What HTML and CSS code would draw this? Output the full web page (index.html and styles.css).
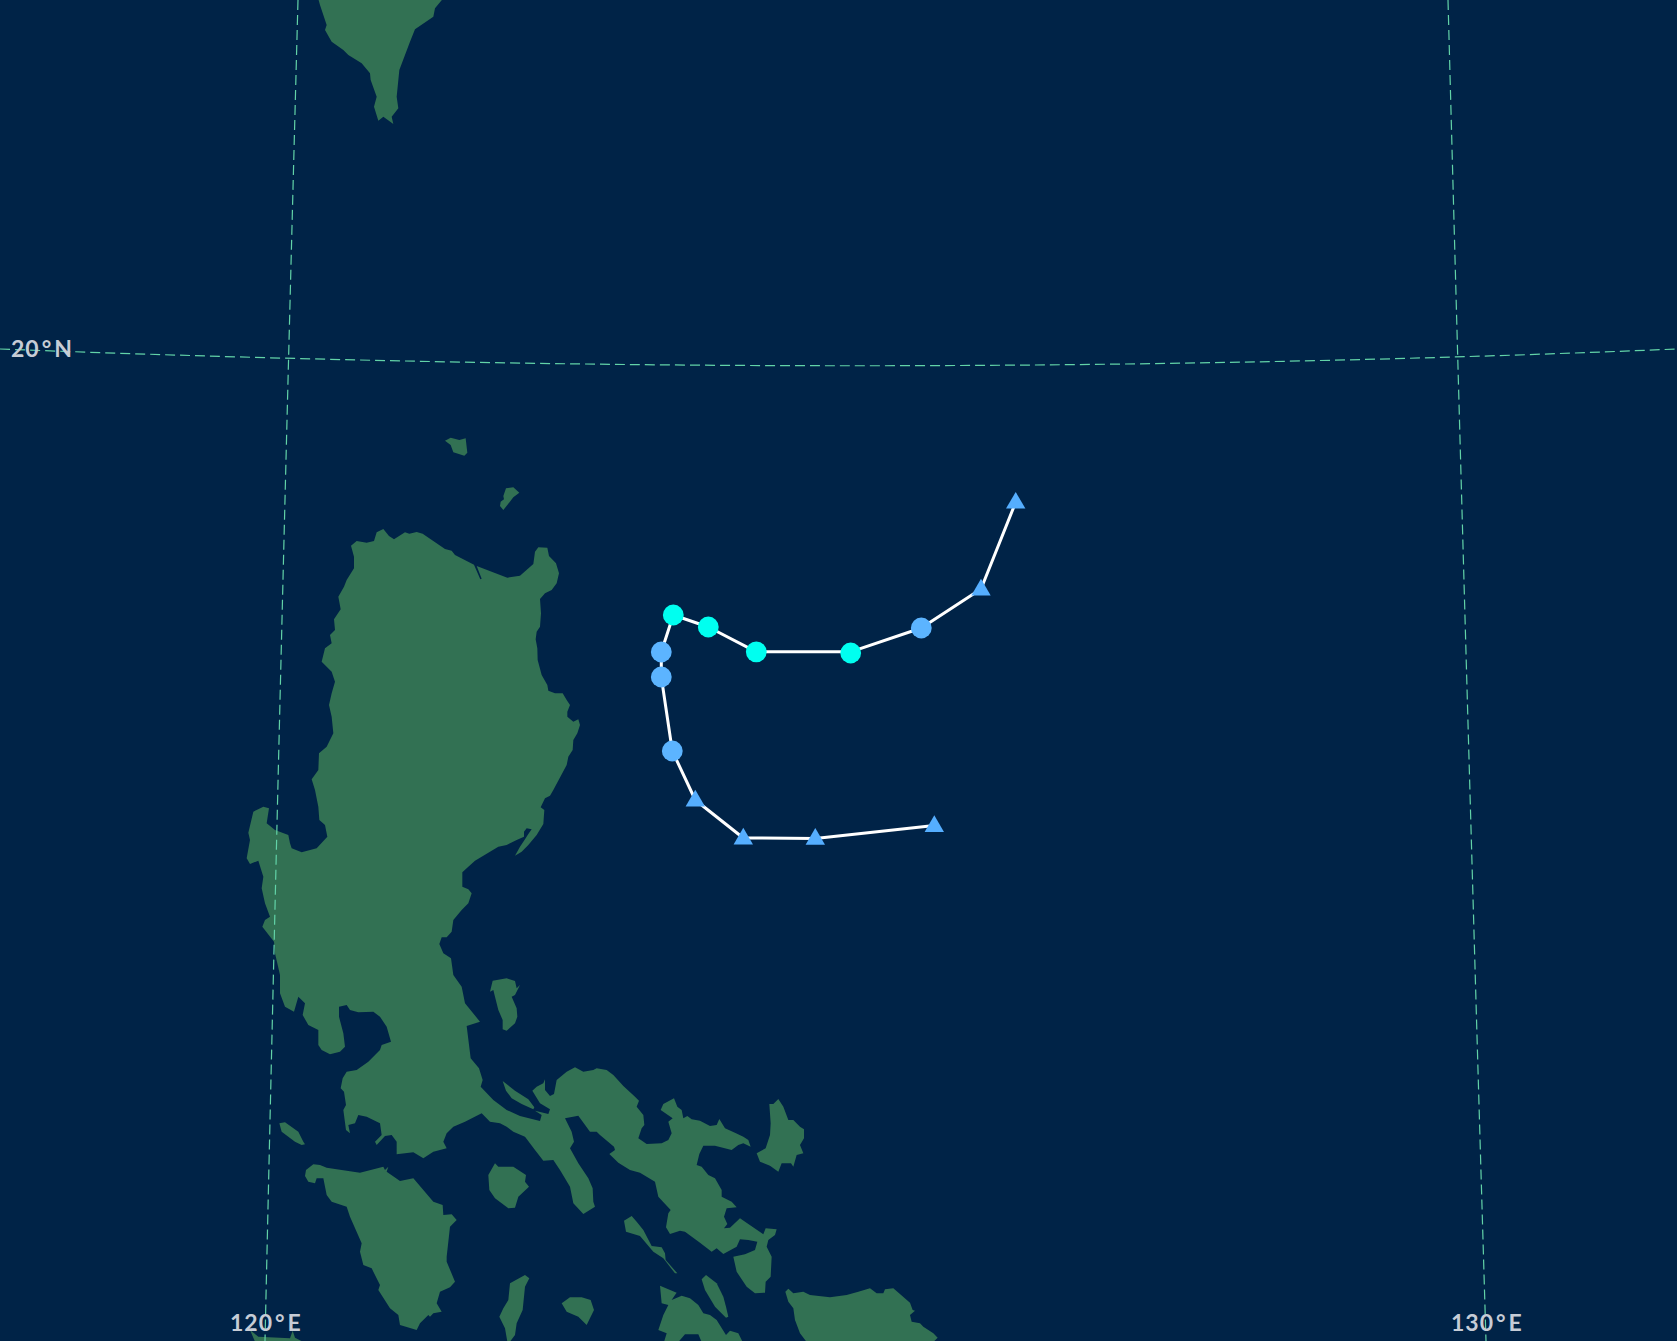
FILE: index.html
```html
<!DOCTYPE html>
<html lang="en">
<head>
<meta charset="utf-8">
<title>Storm track map</title>
<link rel="stylesheet" href="styles.css">
</head>
<body>
<svg class="map" viewBox="0 0 1677 1341" width="1677" height="1341" xmlns="http://www.w3.org/2000/svg">
  <defs>
    <path id="tri" d="M0-10.3 9.7 6.4H-9.7Z"/>
  </defs>

  <g class="land">
    <g transform="translate(220 400) scale(.33333)">
      <polygon points="393,437 410,423 440,428 462,423 470,397 490,387 507,408 522,418 555,397 568,401 590,396 608,401 675,447 695,452 705,465 762,494 781,538 785,536 770,498 862,533 900,527 940,492 945,455 955,442 982,443 987,468 1008,490 1017,520 1010,550 995,570 975,580 960,597 963,640 960,680 950,695 947,718 952,745 953,780 965,825 982,855 985,872 1005,880 1028,880 1040,900 1050,915 1042,935 1042,950 1060,965 1075,958 1080,975 1072,1000 1060,1020 1058,1050 1045,1070 1040,1095 1000,1170 990,1187 975,1195 962,1222 973,1230 970,1272 950,1305 925,1335 905,1355 885,1367 900,1340 915,1318 925,1302 935,1288 920,1285 912,1295 912,1310 890,1320 860,1335 835,1340 810,1355 765,1382 745,1400 727,1417 727,1460 745,1468 755,1480 745,1510 725,1530 700,1560 695,1595 680,1612 665,1612 658,1632 670,1660 693,1675 700,1725 725,1760 735,1810 780,1865 740,1878 752,1975 777,2005 788,2040 782,2060 820,2100 860,2130 900,2148 960,2163 965,2145 945,2132 985,2142 990,2128 960,2110 937,2072 950,2060 970,2050 975,2038 975,2070 990,2088 1002,2082 1010,2040 1040,2015 1065,2002 1090,2015 1120,2010 1130,2005 1160,2010 1180,2025 1210,2058 1245,2090 1257,2102 1250,2120 1270,2145 1273,2175 1265,2185 1255,2215 1280,2232 1325,2230 1345,2220 1355,2200 1345,2165 1358,2155 1322,2130 1330,2112 1362,2095 1372,2120 1385,2130 1390,2155 1402,2148 1415,2158 1440,2162 1470,2178 1490,2175 1498,2157 1515,2185 1548,2200 1570,2210 1585,2220 1592,2240 1570,2230 1555,2235 1535,2250 1485,2237 1450,2237 1438,2262 1430,2295 1445,2300 1465,2325 1485,2335 1505,2370 1505,2390 1535,2405 1550,2422 1520,2425 1512,2450 1522,2472 1512,2485 1530,2483 1560,2455 1585,2472 1630,2503 1637,2485 1670,2488 1665,2505 1645,2520 1640,2540 1655,2570 1652,2630 1637,2645 1635,2678 1605,2680 1580,2660 1550,2615 1540,2570 1575,2563 1605,2550 1612,2525 1585,2520 1560,2518 1550,2540 1510,2562 1490,2545 1475,2555 1440,2528 1395,2495 1380,2492 1350,2502 1338,2482 1345,2440 1352,2430 1315,2390 1305,2345 1260,2318 1230,2310 1195,2288 1168,2262 1185,2250 1182,2240 1140,2205 1130,2195 1110,2195 1075,2147 1035,2155 1055,2195 1062,2225 1050,2245 1075,2290 1105,2335 1118,2365 1120,2405 1125,2420 1090,2442 1060,2410 1050,2360 1020,2310 1000,2280 970,2282 945,2250 915,2210 880,2195 860,2180 840,2170 810,2165 785,2140 735,2165 700,2180 680,2200 670,2225 680,2245 640,2255 610,2275 580,2257 530,2263 530,2225 515,2205 495,2208 470,2235 465,2225 485,2205 480,2170 440,2150 415,2145 405,2170 385,2175 390,2200 378,2190 370,2130 378,2115 372,2075 362,2065 368,2035 380,2015 410,2010 445,1985 480,1950 485,1935 513,1925 500,1880 480,1850 460,1835 415,1837 390,1830 380,1815 357,1820 357,1850 370,1900 375,1940 360,1955 330,1963 305,1950 295,1935 295,1890 265,1875 248,1845 255,1810 235,1790 222,1835 195,1820 180,1780 180,1725 165,1660 162,1625 127,1580 135,1560 150,1550 135,1510 125,1465 130,1430 115,1382 90,1392 80,1375 90,1320 85,1298 100,1235 130,1220 147,1225 140,1270 165,1290 205,1305 210,1330 215,1345 245,1357 290,1345 322,1310 315,1275 298,1260 295,1220 285,1170 275,1138 295,1110 297,1060 320,1040 340,1000 335,950 327,915 335,880 345,845 335,815 305,785 315,745 335,730 330,705 345,690 342,658 362,628 355,590 372,560 380,540 402,505 402,470"/>
      <polygon points="675,122 692,113 718,120 737,115 742,158 733,167 700,157 692,135"/>
      <polygon points="858,265 880,262 898,278 880,292 862,315 850,330 840,318 842,305 852,298 850,288"/>
    </g>
    <g transform="translate(220 820) scale(.33333)">
      <polygon points="255,1068 258,1050 280,1033 300,1035 320,1043 420,1058 490,1040 495,1050 505,1040 500,1055 540,1083 580,1075 640,1145 668,1155 670,1185 695,1183 710,1200 690,1220 680,1310 680,1325 705,1385 690,1402 660,1415 650,1450 665,1475 640,1480 630,1490 625,1485 600,1510 590,1530 540,1515 535,1485 510,1465 475,1410 480,1395 455,1345 430,1335 420,1295 425,1270 390,1190 380,1160 335,1145 320,1125 310,1075 290,1075 285,1090 265,1085"/>
      <polygon points="178,910 195,907 235,935 250,965 255,973 245,975 225,965 185,935"/>
      <polygon points="805,1065 825,1030 835,1040 880,1040 918,1065 915,1085 927,1100 895,1130 885,1163 865,1165 825,1135 808,1110"/>
      <polygon points="870,1390 915,1365 928,1375 915,1400 908,1470 890,1510 885,1545 870,1565 862,1565 855,1525 838,1490 850,1465 865,1440"/>
      <polygon points="1025,1450 1050,1432 1085,1432 1112,1440 1122,1470 1100,1515 1075,1490 1040,1475"/>
      <polygon points="818,482 860,475 885,483 890,505 900,495 885,525 875,530 890,565 892,590 885,610 860,632 848,628 848,600 835,570 825,530 820,510 810,515"/>
      <polygon points="848,783 885,812 925,838 943,862 940,868 905,852 875,835 858,812"/>
      <polygon points="90,1530 115,1550 210,1555 218,1532 225,1553 248,1565 105,1565"/>
    </g>
    <g transform="translate(600 1000) scale(.33333)">
      <polygon points="470,460 497,445 510,405 512,370 508,312 520,312 535,297 550,320 565,360 580,360 600,380 612,388 612,415 600,435 610,460 590,465 580,500 573,490 545,490 535,515 510,497 480,485"/>
      <polygon points="72,662 95,648 110,665 130,690 155,738 185,742 195,760 197,780 232,820 225,820 190,775 160,755 120,708 78,695"/>
      <polygon points="305,838 318,825 350,850 370,890 378,920 385,950 378,953 345,920 315,870"/>
      <polygon points="180,857 230,878 225,885 215,900 245,887 270,895 295,915 310,940 330,945 350,960 378,1005 390,992 415,1000 428,1026 305,1026 295,1003 255,1003 235,1026 192,1026 200,1000 175,990 190,945 205,915 185,910"/>
      <polygon points="556,875 565,866 580,880 610,875 630,885 690,892 740,885 775,875 810,865 830,880 850,880 855,868 880,865 930,908 938,930 945,932 930,945 935,965 960,970 970,980 1000,1000 1013,1013 1000,1026 620,1026 600,1000 585,960 580,925 565,905"/>
    </g>
    <g transform="translate(290 0) scale(.33333)">
      <polygon points="85,-3 90,15 110,75 105,90 125,125 160,150 175,165 215,190 240,220 242,240 260,290 252,320 265,362 280,350 310,372 305,350 325,325 320,290 328,210 360,125 375,88 430,50 435,25 458,-3"/>
    </g>
  </g>

  <g class="grid">
    <path d="M298 0Q280 670 265 1341"/>
    <path d="M1448 0Q1466 670 1486 1341"/>
    <path d="M0 349Q875 382.5 1677 349"/>
  </g>

  <g class="labels">
    <text x="11" y="357">20<tspan class="deg" dx="2">°</tspan><tspan dx="2">N</tspan></text>
    <text x="230" y="1331">120<tspan class="deg" dx="2">°</tspan><tspan dx="2">E</tspan></text>
    <text x="1451" y="1331">130<tspan class="deg" dx="2">°</tspan><tspan dx="2">E</tspan></text>
  </g>

  <polyline class="track" points="1015.7,502.2 981,589 921.3,628 850.7,651.8 756.3,651.8 708.3,627 673.3,615 661.3,652 661.3,677 672.3,751 695.3,800 743.3,838 815.3,838.4 934.3,825.6"/>

  <g class="mark-td">
    <use href="#tri" x="1015.7" y="502.2"/>
    <use href="#tri" x="981" y="589"/>
    <use href="#tri" x="695.3" y="800"/>
    <use href="#tri" x="743.3" y="838"/>
    <use href="#tri" x="815.3" y="838.4"/>
    <use href="#tri" x="934.3" y="825.6"/>
  </g>
  <g class="mark-ts">
    <circle cx="921.3" cy="628" r="10.4"/>
    <circle cx="661.3" cy="652" r="10.4"/>
    <circle cx="661.3" cy="677" r="10.4"/>
    <circle cx="672.3" cy="751" r="10.4"/>
  </g>
  <g class="mark-sts">
    <circle cx="850.7" cy="653" r="10.4"/>
    <circle cx="756.3" cy="651.8" r="10.4"/>
    <circle cx="708.3" cy="627" r="10.4"/>
    <circle cx="673.3" cy="615" r="10.4"/>
  </g>
</svg>
</body>
</html>
```

FILE: styles.css
```css
html, body {
  margin: 0;
  padding: 0;
  background: #002347;
}

body {
  overflow: hidden;
}

.map {
  display: block;
}

.land {
  fill: #327153;
}

.grid {
  fill: none;
  stroke: #62d3a8;
  stroke-width: 1.2;
  stroke-dasharray: 10 5;
}

.labels {
  fill: #c6ccd6;
  font-family: Lato, "Noto Sans", sans-serif;
  font-size: 23px;
  font-weight: 700;
  letter-spacing: 1px;
}

.deg {
  font-size: 23px;
}

.track {
  fill: none;
  stroke: #ffffff;
  stroke-width: 3;
  stroke-linejoin: round;
}

.mark-td {
  fill: #55aeff;
}

.mark-ts {
  fill: #5cb4ff;
}

.mark-sts {
  fill: #00fff0;
}
```
